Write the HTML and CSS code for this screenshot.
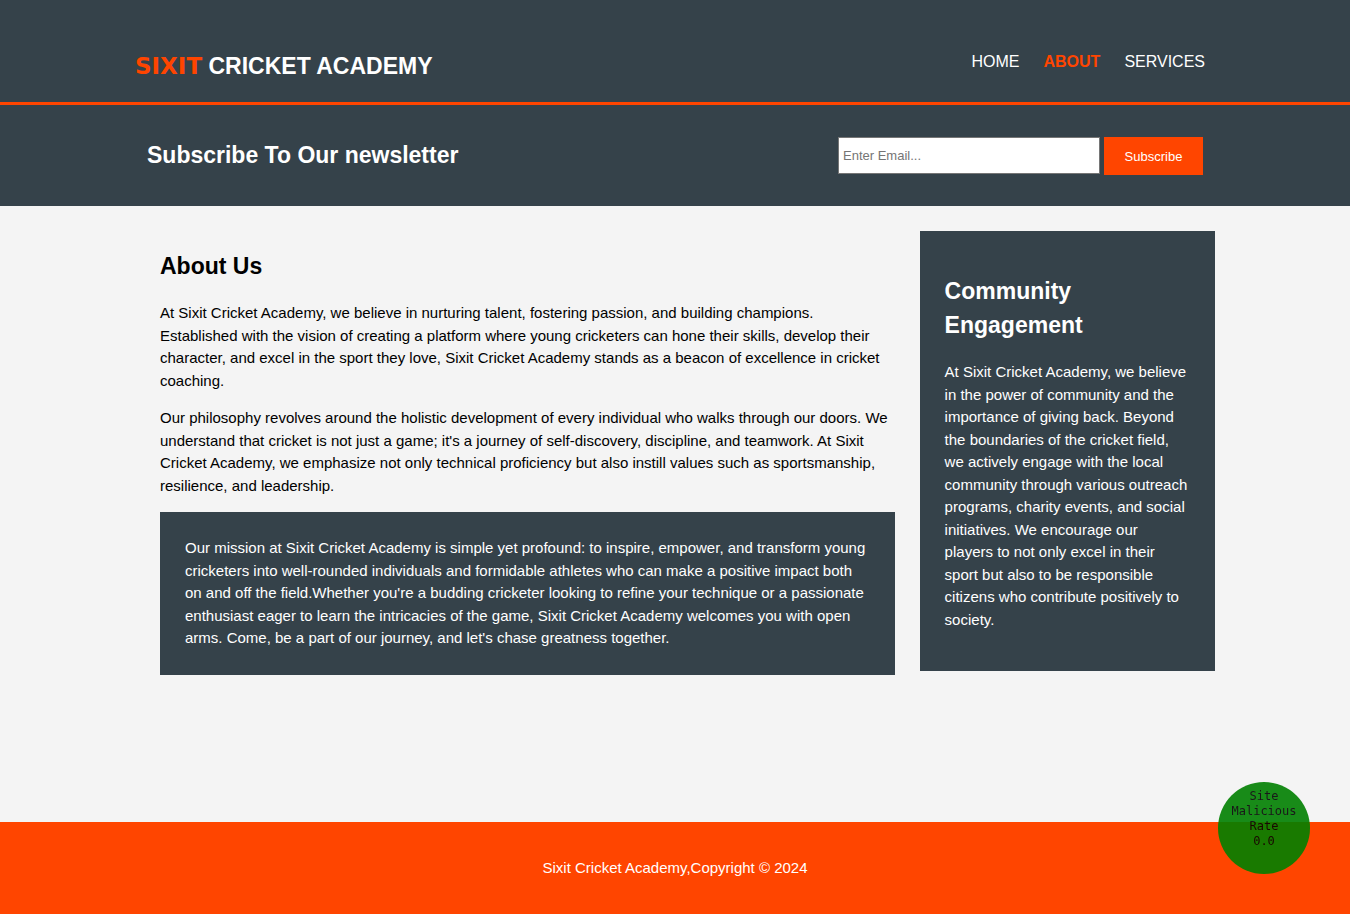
FILE: index.html
```html
<!DOCTYPE html>
<html lang="en">
<head>
<meta charset="utf-8">
<meta name="viewport" content="width=device-width">
<title>Sixit Cricket Academy | About</title>
<link rel="stylesheet" href="styles.css">
</head>
<body>
<header class="site-header">
  <div class="container header-row">
    <h1 class="branding"><span class="highlight">SIXIT</span> CRICKET ACADEMY</h1>
    <nav class="site-nav">
      <a href="#">HOME</a>
      <a href="#" class="current">ABOUT</a>
      <a href="#">SERVICES</a>
    </nav>
  </div>
</header>
<section class="newsletter">
  <div class="container newsletter-row">
    <h2 class="newsletter-title">Subscribe To Our newsletter</h2>
    <form class="newsletter-form">
      <input type="email" class="email" aria-label="Email" placeholder="Enter Email...">
      <button type="submit" class="subscribe">Subscribe</button>
    </form>
  </div>
</section>
<main class="container main-row">
  <article class="about">
    <h2 class="title">About Us</h2>
    <p>At Sixit Cricket Academy, we believe in nurturing talent, fostering passion, and building champions. Established with the vision of creating a platform where young cricketers can hone their skills, develop their character, and excel in the sport they love, Sixit Cricket Academy stands as a beacon of excellence in cricket coaching.</p>
    <p>Our philosophy revolves around the holistic development of every individual who walks through our doors. We understand that cricket is not just a game; it's a journey of self-discovery, discipline, and teamwork. At Sixit Cricket Academy, we emphasize not only technical proficiency but also instill values such as sportsmanship, resilience, and leadership.</p>
    <p class="dark mission">Our mission at Sixit Cricket Academy is simple yet profound: to inspire, empower, and transform young cricketers into well-rounded individuals and formidable athletes who can make a positive impact both on and off the field.Whether you're a budding cricketer looking to refine your technique or a passionate enthusiast eager to learn the intricacies of the game, Sixit Cricket Academy welcomes you with open arms. Come, be a part of our journey, and let's chase greatness together.</p>
  </article>
  <aside class="dark community">
    <h2 class="title">Community Engagement</h2>
    <p>At Sixit Cricket Academy, we believe in the power of community and the importance of giving back. Beyond the boundaries of the cricket field, we actively engage with the local community through various outreach programs, charity events, and social initiatives. We encourage our players to not only excel in their sport but also to be responsible citizens who contribute positively to society.</p>
  </aside>
</main>
<footer class="site-footer">
  <p>Sixit Cricket Academy,Copyright © 2024</p>
</footer>
<div class="rate-badge">Site Malicious Rate<br>0.0</div>
</body>
</html>
```
FILE: styles.css
```css
* { box-sizing: border-box; }

body {
  margin: 0;
  min-height: 100vh;
  display: flex;
  flex-direction: column;
  font: 15px/1.5 "Liberation Sans", Arial, Helvetica, sans-serif;
  background: #f4f4f4;
  color: #000;
}

.container {
  width: 80%;
  margin: 0 auto;
}

.site-header {
  background: #35424a;
  color: #fff;
  padding: 48px 0 18px;
  border-bottom: 3px solid #ff4500;
}

.header-row {
  display: flex;
  justify-content: space-between;
}

.branding {
  margin: 0;
  font-size: 23px;
  line-height: 36px;
}

.highlight {
  color: #ff4500;
  font-family: "Arial Black", "DejaVu Sans", sans-serif;
  font-weight: 900;
}

.site-nav {
  display: flex;
  gap: 24px;
  padding-right: 10px;
  font-size: 16px;
  line-height: 28px;
}

.site-nav a { color: #fff; text-decoration: none; }
.site-nav .current { color: #ff4500; font-weight: bold; }

.newsletter {
  background: #35424a;
  color: #fff;
  padding: 32px 0 31px;
}

.newsletter-row {
  display: flex;
  justify-content: space-between;
  padding: 0 12px;
}

.newsletter-title {
  margin: 0;
  font-size: 23px;
  line-height: 36px;
}

.newsletter-form {
  display: flex;
  align-items: flex-start;
  gap: 4px;
}

.email {
  width: 262px;
  height: 37px;
  padding: 0 4px;
  border: 1px solid #767676;
  background: #fff;
  font: 13px "Liberation Sans", Arial, sans-serif;
}

.subscribe {
  min-width: 99px;
  height: 38px;
  padding: 0 20px;
  border: 0;
  background: #ff4500;
  color: #fff;
  font: 13px "Liberation Sans", Arial, sans-serif;
}

.main-row {
  flex: 1;
  display: flex;
  align-items: flex-start;
  gap: 25px;
  padding: 25px 0 146px 25px;
}

.about { flex: 1; padding-top: 18px; }

.title {
  margin: 0 0 19px;
  font-size: 23px;
  line-height: 34px;
}

p { margin: 0 0 15px; }

.dark { background: #35424a; color: #fff; padding: 25px; }
.mission { margin: 0; }

.community {
  width: 28%;
  padding-top: 43px;
}

.site-footer {
  background: #ff4500;
  color: #fff;
  padding: 35px 20px;
  text-align: center;
}

.site-footer p { margin: 0; }

.rate-badge {
  position: fixed;
  right: 40px;
  bottom: 40px;
  width: 92px;
  height: 92px;
  padding: 7px 10px;
  border-radius: 50%;
  background: #008000;
  opacity: 0.9;
  color: #000;
  font: 12px/15px "DejaVu Sans Mono", monospace;
  text-align: center;
}
```
